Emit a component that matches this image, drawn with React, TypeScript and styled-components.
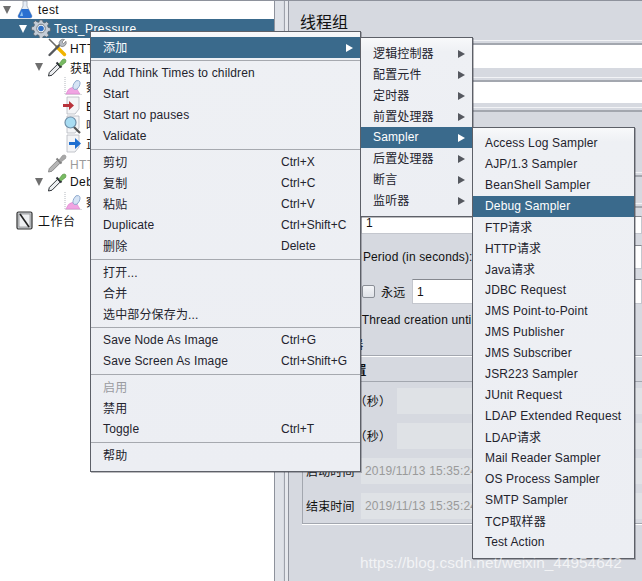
import React from "react";
import styled, { createGlobalStyle } from "styled-components";

const GlobalStyle = createGlobalStyle`
  html, body {
    margin: 0;
    padding: 0;
    background: #d6d9e0;
  }
  * {
    box-sizing: border-box;
  }
`;

const FONT = `"Liberation Sans", "Noto Sans CJK SC", sans-serif`;

const Screen = styled.div`
  position: relative;
  width: 642px;
  height: 581px;
  overflow: hidden;
  display: flex;
  font-family: ${FONT};
  font-size: 12px;
  letter-spacing: 0.15px;
  color: #111;
  &::before {
    content: "";
    position: absolute;
    top: 0;
    left: 0;
    right: 0;
    height: 1px;
    background: #8e929c;
  }
`;

/* left tree */
const TreePane = styled.div`
  width: 274px;
  flex: none;
  background: #fff;
  height: 100%;
  overflow: hidden;
  letter-spacing: 0.45px;
`;

const TreeRowBox = styled.div<{ $depth: number; $selected?: boolean; $muted?: boolean }>`
  display: flex;
  align-items: center;
  height: 19.2px;
  padding-left: ${(p) => p.$depth * 16}px;
  white-space: nowrap;
  background: ${(p) => (p.$selected ? "#3a6a8c" : "transparent")};
  color: ${(p) => (p.$selected ? "#fff" : p.$muted ? "#9b9b9b" : "#111")};
`;

const Twisty = styled.span<{ $light?: boolean; $hidden?: boolean }>`
  width: 15px;
  flex: none;
  display: flex;
  padding-left: 3px;
  &::before {
    content: "";
    display: ${(p) => (p.$hidden ? "none" : "block")};
    border-left: 4px solid transparent;
    border-right: 4px solid transparent;
    border-top: 8px solid ${(p) => (p.$light ? "#fff" : "#6f6f6f")};
  }
`;

const TreeIcon = styled.svg`
  width: 20px;
  height: 19px;
  flex: none;
  margin-right: 3px;
`;

/* splitter between the tree and the form */
const Splitter = styled.div`
  width: 15px;
  flex: none;
  height: 100%;
  background: #d8dbe2;
  border-left: 1px solid #8e929c;
  border-right: 1px solid #8e929c;
  box-shadow: inset 8px 0 0 #dfe2e8, inset -3px 0 0 #e6e8ed;
  &::after {
    content: "";
    display: block;
    width: 1px;
    height: 100%;
    margin-left: 9px;
    background: #9ea2ab;
  }
`;

/* right form */
const FormPane = styled.div`
  flex: 1;
  min-width: 0;
  display: flex;
  flex-direction: column;
  background: #d6d9e0;
`;

const Title = styled.div`
  height: 40px;
  padding: 13px 0 0 11px;
  font-size: 16px;
  line-height: 20px;
  letter-spacing: 0;
`;

const Etched = styled.div<{ $gap?: number }>`
  height: 5px;
  flex: none;
  margin-top: ${(p) => p.$gap ?? 0}px;
  border-top: 1px solid #f2f3f6;
  border-bottom: 2px solid #a3a7af;
  background: #d6d9e0;
`;

const FullField = styled.div<{ $h: number }>`
  height: ${(p) => p.$h}px;
  flex: none;
  background: #fff;
`;

const SectionLabel = styled.div`
  height: 16px;
  flex: none;
  padding-left: 17px;
  line-height: 9px;
  white-space: nowrap;
`;

const FormRow = styled.div<{ $h: number; $gap?: number }>`
  height: ${(p) => p.$h}px;
  margin-top: ${(p) => p.$gap ?? 0}px;
  padding-left: 17px;
  flex: none;
  display: flex;
  align-items: center;
  white-space: nowrap;
`;

const RowLabel = styled.span<{ $w?: number; $nudge?: number }>`
  width: ${(p) => (p.$w ? `${p.$w}px` : "auto")};
  padding-left: ${(p) => p.$nudge ?? 0}px;
  flex: none;
`;

const TextInput = styled.div<{ $high?: boolean }>`
  flex: 1;
  height: 100%;
  min-width: 0;
  background: #fff;
  border: 1px solid #c4c7ce;
  border-top-color: #85888f;
  padding: 0 0 ${(p) => (p.$high ? 5 : 0)}px 4px;
  display: flex;
  align-items: center;
`;

const CheckBox = styled.span`
  width: 13px;
  height: 13px;
  flex: none;
  border: 1px solid #8a8e96;
  border-radius: 2px;
  background: linear-gradient(#f4f5f8, #dfe2e8);
`;

const CheckText = styled.span`
  margin-left: 8px;
`;

const Group = styled.div`
  margin: 2px 0 0 13px;
  height: 169px;
  flex: none;
  border: 1px solid #a3a7af;
  border-right: 0;
  box-shadow: 0 1px 0 #fff, inset 0 1px 0 #fff;
`;

const GroupHead = styled.div`
  height: 26px;
  padding: 4px 0 0 3px;
  font-weight: 700;
  line-height: 22px;
  border-bottom: 1px solid #a3a7af;
`;

const GroupRow = styled.div<{ $top: number; $w: number }>`
  display: flex;
  align-items: center;
  height: 26px;
  margin-top: ${(p) => p.$top}px;
  padding-left: 3px;
  white-space: nowrap;
  & > span {
    width: ${(p) => p.$w}px;
    flex: none;
    padding-bottom: 2px;
  }
`;

const DisabledInput = styled.div`
  flex: 1;
  height: 100%;
  background: #dfe2e6;
  color: #9a9a9a;
  padding: 0 0 1px 4px;
  display: flex;
  align-items: center;
`;

/* popup menus */
const MenuPanel = styled.div<{ $top: number; $left: number; $w: number; $h: number }>`
  position: absolute;
  top: ${(p) => p.$top}px;
  left: ${(p) => p.$left}px;
  width: ${(p) => p.$w}px;
  height: ${(p) => p.$h}px;
  padding-top: 5px;
  background: linear-gradient(#f8f9fb 0, #eef0f4 14px, #eceef3 100%);
  border: 1px solid #5d6068;
  box-shadow: 1px 1px 0 rgba(60, 60, 70, 0.35);
  color: #23232d;
`;

const MenuRow = styled.div<{ $active?: boolean; $disabled?: boolean; $pad: number }>`
  height: 21px;
  display: flex;
  align-items: center;
  padding: 0 0 2px ${(p) => p.$pad}px;
  white-space: nowrap;
  background: ${(p) => (p.$active ? "#3a6a8c" : "transparent")};
  color: ${(p) => (p.$active ? "#fff" : p.$disabled ? "#9a9ba0" : "inherit")};
`;

const MenuLabel = styled.span<{ $w: number }>`
  width: ${(p) => p.$w}px;
  flex: none;
`;

const Shortcut = styled.span`
  flex: none;
  letter-spacing: 0;
`;

const MenuArrow = styled.span<{ $light?: boolean }>`
  width: 0;
  height: 0;
  flex: none;
  margin-top: 2px;
  border-top: 4px solid transparent;
  border-bottom: 4px solid transparent;
  border-left: 7px solid ${(p) => (p.$light ? "#fff" : "#55585f")};
`;

const MenuSep = styled.div`
  height: 1px;
  margin: 2px 0;
  box-sizing: content-box;
  background: #a6a9af;
`;

const Watermark = styled.div`
  position: absolute;
  left: 360px;
  top: 553px;
  font-size: 15.4px;
  letter-spacing: 0;
  line-height: 20px;
  color: rgba(255, 255, 255, 0.7);
`;

/* tree icons */
const FlaskIcon = () => (
  <TreeIcon viewBox="0 0 20 19">
    <path d="M8 1h4v5l5 10q0 2-2 2H5q-2 0-2-2L8 6z" fill="#e6edf6" stroke="#9aa2b0" strokeWidth="0.7" />
    <path d="M6.500 9h7L17 16q0 2-2 2H5q-2 0-2-2z" fill="#2a6fd0" />
    <path d="M7 11l-2 5h3z" fill="#8cc0f0" />
  </TreeIcon>
);

const GearIcon = () => (
  <TreeIcon viewBox="0 0 20 19">
    <path
      d="M8.500 1h3l.5 2.200 1.700.7 2-1.200 2 2-1.200 2 .7 1.700 2.300.6v3l-2.300.5-.7 1.700 1.200 2-2 2-2-1.200-1.700.7-.5 2.300h-3L8 16.500l-1.700-.7-2 1.200-2-2 1.200-2-.7-1.700L.5 11V8l2.300-.6.7-1.700-1.200-2 2-2 2 1.200L8 3.200z"
      fill="#c4ccd6"
      stroke="#5c6670"
      strokeWidth="0.8"
    />
    <circle cx="10" cy="9.500" r="4.300" fill="#eef1f4" stroke="#5c6670" strokeWidth="0.8" />
    <circle cx="10" cy="9.500" r="2.800" fill="#2f6fc4" />
  </TreeIcon>
);

const ToolsIcon = () => (
  <TreeIcon viewBox="0 0 20 19">
    <path d="M10 9l7.500 7.500" stroke="#f0b400" strokeWidth="3.400" strokeLinecap="round" />
    <path d="M2 1l9 9" stroke="#6a6a6a" strokeWidth="1.600" />
    <path d="M2.500 17L13 6.500" stroke="#55585c" strokeWidth="2.400" strokeLinecap="round" />
    <path d="M12.500 7a4 4 0 0 1 5-5.500l-2.500 2.500 1.500 1.500 2.500-2.300a4 4 0 0 1-5.500 5z" fill="#b4bac2" stroke="#666" strokeWidth="0.6" />
  </TreeIcon>
);

const DropperIcon = ({ gray }: { gray?: boolean }) => (
  <TreeIcon viewBox="0 0 20 19">
    <path d="M1.500 18l.8-3.500 8.200-8.200 2.700 2.700-8.200 8.200z" fill={gray ? "#b5b5b5" : "#eceef1"} stroke={gray ? "#8c8c8c" : "#2f3338"} strokeWidth="1" />
    <path d="M9.500 4.500l5 5" stroke={gray ? "#808080" : "#2f3338"} strokeWidth="2" />
    <path d="M12 6l3.500-4.500q2-1 3 0t0 3L14 8z" fill={gray ? "#a8a8a8" : "#78bb62"} stroke={gray ? "#8c8c8c" : "#4d8a3c"} strokeWidth="0.6" />
  </TreeIcon>
);

const GraphIcon = () => (
  <TreeIcon viewBox="0 0 20 19">
    <path d="M2 0v17.500h17" fill="none" stroke="#b4b8bf" strokeWidth="1" strokeDasharray="1 1" />
    <path d="M3 17q2-6 6-6.500t5 1.500 3 5z" fill="#f0a4e2" stroke="#d67ac6" strokeWidth="0.5" />
    <ellipse cx="13.500" cy="8" rx="3" ry="4.800" fill="#d6e4f5" stroke="#86a2c8" strokeWidth="0.8" transform="rotate(25 13.500 8)" />
  </TreeIcon>
);

const Sheet = () => <path d="M4 1h12v12l-4 5H4z" fill="#f3f4f6" stroke="#b4b8bf" strokeWidth="0.8" />;

const RedArrowIcon = () => (
  <TreeIcon viewBox="0 0 20 19">
    <Sheet />
    <path d="M0 8h6V5l5 4.500L6 14v-3H0z" fill="#b8323a" />
  </TreeIcon>
);

const LensIcon = () => (
  <TreeIcon viewBox="0 0 20 19">
    <Sheet />
    <path d="M10 11l7 7" stroke="#555" strokeWidth="2.200" />
    <circle cx="7.500" cy="7.500" r="5.500" fill="#a8dcf2" stroke="#6f8fa8" strokeWidth="1.200" />
  </TreeIcon>
);

const BlueArrowIcon = () => (
  <TreeIcon viewBox="0 0 20 19">
    <Sheet />
    <path d="M6 8h6V4l6 5.500L12 15v-4H6z" fill="#1f6fd0" />
  </TreeIcon>
);

const NotebookIcon = () => (
  <TreeIcon viewBox="0 0 20 19">
    <rect x="2" y="1" width="15" height="17" rx="1.500" fill="#c8ccd0" stroke="#333" strokeWidth="1.200" />
    <rect x="4" y="3" width="11" height="13" fill="#eef0f2" stroke="#777" strokeWidth="0.6" />
    <path d="M5 3l9 13" stroke="#222" strokeWidth="1.600" />
  </TreeIcon>
);

const TreeRow = ({
  depth,
  label,
  icon,
  open,
  selected,
  muted,
}: {
  depth: number;
  label: string;
  icon: React.ReactNode;
  open?: boolean;
  selected?: boolean;
  muted?: boolean;
}) => (
  <TreeRowBox $depth={depth} $selected={selected} $muted={muted}>
    <Twisty $hidden={!open} $light={selected} />
    {icon}
    <span>{label}</span>
  </TreeRowBox>
);

const mainMenu: (string | null | [string, string])[] = [
  null,
  "Add Think Times to children",
  "Start",
  "Start no pauses",
  "Validate",
  null,
  ["剪切", "Ctrl+X"],
  ["复制", "Ctrl+C"],
  ["粘贴", "Ctrl+V"],
  ["Duplicate", "Ctrl+Shift+C"],
  ["删除", "Delete"],
  null,
  "打开...",
  "合并",
  "选中部分保存为...",
  null,
  ["Save Node As Image", "Ctrl+G"],
  ["Save Screen As Image", "Ctrl+Shift+G"],
  null,
  "启用",
  "禁用",
  ["Toggle", "Ctrl+T"],
  null,
  "帮助",
];

const addMenu = ["逻辑控制器", "配置元件", "定时器", "前置处理器", "Sampler", "后置处理器", "断言", "监听器"];

const samplers = [
  "Access Log Sampler",
  "AJP/1.3 Sampler",
  "BeanShell Sampler",
  "Debug Sampler",
  "FTP请求",
  "HTTP请求",
  "Java请求",
  "JDBC Request",
  "JMS Point-to-Point",
  "JMS Publisher",
  "JMS Subscriber",
  "JSR223 Sampler",
  "JUnit Request",
  "LDAP Extended Request",
  "LDAP请求",
  "Mail Reader Sampler",
  "OS Process Sampler",
  "SMTP Sampler",
  "TCP取样器",
  "Test Action",
];

export default function App() {
  return (
    <>
      <GlobalStyle />
      <Screen>
        <TreePane>
          <TreeRow depth={0} label="test" icon={<FlaskIcon />} open />
          <TreeRow depth={1} label="Test_Pressure" icon={<GearIcon />} open selected />
          <TreeRow depth={2} label="HTTP信息头管理器" icon={<ToolsIcon />} />
          <TreeRow depth={2} label="获取token" icon={<DropperIcon />} open />
          <TreeRow depth={3} label="察看结果树" icon={<GraphIcon />} />
          <TreeRow depth={3} label="BeanShell 后置处理程序" icon={<RedArrowIcon />} />
          <TreeRow depth={3} label="响应断言" icon={<LensIcon />} />
          <TreeRow depth={3} label="正则表达式提取器" icon={<BlueArrowIcon />} />
          <TreeRow depth={2} label="HTTP请求" icon={<DropperIcon gray />} muted />
          <TreeRow depth={2} label="Debug Sampler" icon={<DropperIcon />} open />
          <TreeRow depth={3} label="察看结果树" icon={<GraphIcon />} />
          <TreeRow depth={0} label="工作台" icon={<NotebookIcon />} />
        </TreePane>
        <Splitter />
        <FormPane>
          <Title>线程组</Title>
          <Etched />
          <FullField $h={23} />
          <Etched $gap={9} />
          <FullField $h={21} />
          <Etched $gap={4} />
          <SectionLabel>在取样器错误后要执行的动作</SectionLabel>
          <Etched $gap={44} />
          <Etched $gap={26} />
          <FormRow $h={18} $gap={8}>
            <RowLabel $w={55}>线程数：</RowLabel>
            <TextInput $high>1</TextInput>
          </FormRow>
          <FormRow $h={24} $gap={11}>
            <RowLabel $w={169} $nudge={1}>Ramp-Up Period (in seconds):</RowLabel>
            <TextInput />
          </FormRow>
          <FormRow $h={25} $gap={10}>
            <RowLabel $w={56}>循环次数</RowLabel>
            <CheckBox />
            <RowLabel $w={37} $nudge={6}>永远</RowLabel>
            <TextInput>1</TextInput>
          </FormRow>
          <FormRow $h={20} $gap={6}>
            <CheckBox />
            <CheckText>Delay Thread creation until needed</CheckText>
          </FormRow>
          <FormRow $h={20} $gap={3}>
            <CheckBox />
            <CheckText>调度器</CheckText>
          </FormRow>
          <Group>
            <GroupHead>调度器配置</GroupHead>
            <GroupRow $top={6} $w={91}>
              <span>持续时间（秒）</span>
              <DisabledInput />
            </GroupRow>
            <GroupRow $top={9} $w={91}>
              <span>启动延迟（秒）</span>
              <DisabledInput />
            </GroupRow>
            <GroupRow $top={9} $w={55}>
              <span>启动时间</span>
              <DisabledInput>2019/11/13 15:35:24</DisabledInput>
            </GroupRow>
            <GroupRow $top={9} $w={55}>
              <span>结束时间</span>
              <DisabledInput>2019/11/13 15:35:24</DisabledInput>
            </GroupRow>
          </Group>
        </FormPane>

        <MenuPanel $top={31} $left={90} $w={271} $h={441}>
          <MenuRow $active $pad={12}>
            <MenuLabel $w={243}>添加</MenuLabel>
            <MenuArrow $light />
          </MenuRow>
          {mainMenu.map((item, i) => {
            if (item === null) return <MenuSep key={i} />;
            const [label, keys] = typeof item === "string" ? [item, ""] : item;
            return (
              <MenuRow key={i} $pad={12} $disabled={label === "启用"}>
                <MenuLabel $w={178}>{label}</MenuLabel>
                {keys && <Shortcut>{keys}</Shortcut>}
              </MenuRow>
            );
          })}
        </MenuPanel>

        <MenuPanel $top={37} $left={360} $w={113} $h={180}>
          {addMenu.map((label) => (
            <MenuRow key={label} $pad={12} $active={label === "Sampler"}>
              <MenuLabel $w={85}>{label}</MenuLabel>
              <MenuArrow $light={label === "Sampler"} />
            </MenuRow>
          ))}
        </MenuPanel>

        <MenuPanel $top={127} $left={472} $w={163} $h={432}>
          {samplers.map((label) => (
            <MenuRow key={label} $pad={12} $active={label === "Debug Sampler"}>
              {label}
            </MenuRow>
          ))}
        </MenuPanel>

        <Watermark>https://blog.csdn.net/weixin_44954642</Watermark>
      </Screen>
    </>
  );
}
